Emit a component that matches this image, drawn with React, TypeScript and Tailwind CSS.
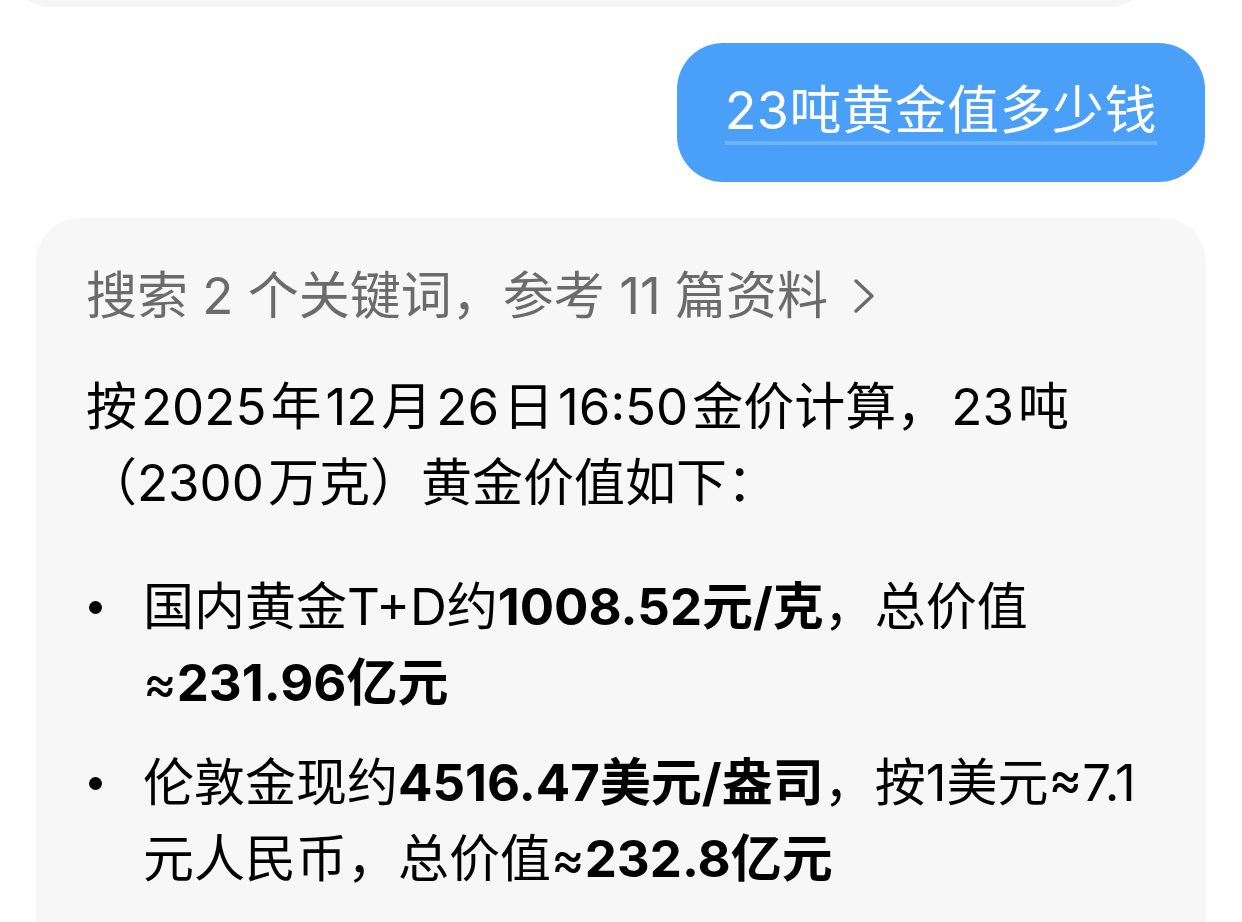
import React from "react";

function Chevron() {
  return (
    <svg width="24" height="36" viewBox="0 0 24 36" className="ml-[24px]" fill="none">
      <path d="M4 3 L20 18 L4 33" stroke="#6b6b6b" strokeWidth="3.4" strokeLinecap="round" strokeLinejoin="round" />
    </svg>
  );
}

function Bullet({ children }: { children: React.ReactNode }) {
  return (
    <div className="flex">
      <div className="w-[57px] h-[76px] flex items-center shrink-0">
        <span className="ml-[3px] w-[13px] h-[13px] rounded-full bg-black" />
      </div>
      <div className="flex-1">{children}</div>
    </div>
  );
}

function N({ children }: { children: React.ReactNode }) {
  return <span className="mx-[4px]">{children}</span>;
}

export default function App() {
  return (
    <div
      className="w-[1242px] h-[922px] overflow-hidden bg-white"
      style={{ fontFamily: 'Inter, "Noto Sans CJK SC", sans-serif' }}
    >
      <div className="h-[7px] overflow-hidden px-[15px]">
        <div className="h-[80px] -mt-[73px] w-[1130px] rounded-[34px] bg-[#f5f5f5]" />
      </div>

      <div className="flex justify-end pr-[37px] mt-[36px]">
        <div className="h-[139px] rounded-[46px] bg-[#4a9ff8] px-[48px] flex items-center">
          <span className="text-white text-[52px] tracking-[0.5px] leading-[60px] border-b-4 border-[#6db4fb]">
            23吨黄金值多少钱
          </span>
        </div>
      </div>

      <div className="mx-[36px] mt-[36px] h-[800px] rounded-t-[44px] bg-[#f7f7f7] px-[50px] pt-[40px] text-[51px] leading-[76px] text-black">
        <div className="flex items-center text-[#6b6b6b]">
          <span>搜索 2 个关键词，参考 11 篇资料</span>
          <Chevron />
        </div>

        <p className="mt-[35px]">
          按<N>2025</N>年<N>12</N>月<N>26</N>日<N>16:50</N>金价计算，<N>23</N>吨
          <br />
          （2300<span className="mr-[4px]" />万克）黄金价值如下：
        </p>

        <div className="mt-[48px] flex flex-col gap-[24px]">
          <Bullet>
            国内黄金T+D约<b className="font-bold">1008.52元/克</b>，总价值
            <br />
            ≈<b className="font-bold">231.96亿元</b>
          </Bullet>
          <Bullet>
            伦敦金现约<b className="font-bold">4516.47美元/盎司</b>，按1美元≈7.1
            <br />
            元人民币，总价值≈<b className="font-bold">232.8亿元</b>
          </Bullet>
        </div>
      </div>
    </div>
  );
}
